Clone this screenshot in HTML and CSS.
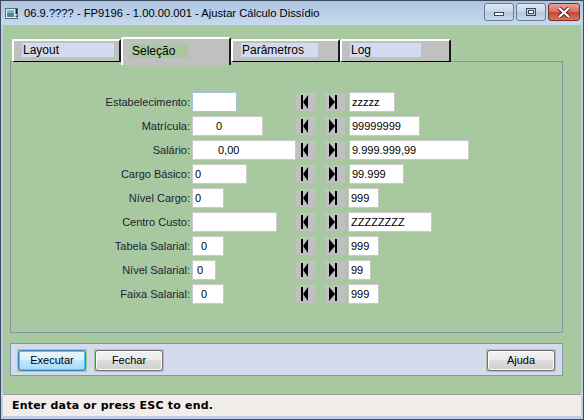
FILE: index.html
```html
<!DOCTYPE html>
<html>
<head>
<meta charset="utf-8">
<link rel="stylesheet" href="styles.css">
</head>
<body>
<div class="window">
  <div class="titlebar">
    <svg class="appicon" width="14" height="12" viewBox="0 0 14 12">
      <rect x="0.5" y="0.5" width="12" height="10" fill="#e8eef4" stroke="#5a6a7a"/>
      <rect x="2" y="2" width="7" height="7" fill="#3f8f8a"/>
      <rect x="2" y="2" width="7" height="3" fill="#7fb8c8"/>
      <rect x="10.5" y="1" width="1.5" height="5" fill="#1a1a1a"/>
      <rect x="10.5" y="7.5" width="1.5" height="1.5" fill="#1a1a1a"/>
    </svg>
    <span class="title">06.9.???? - FP9196 - 1.00.00.001 - Ajustar Cálculo Dissídio</span>
    <div class="controls">
      <div class="wbtn"><svg width="12" height="10" viewBox="0 0 12 10"><rect x="1.5" y="5.5" width="9" height="3" fill="#fff" stroke="#3a4656"/></svg></div>
      <div class="wbtn"><svg width="12" height="10" viewBox="0 0 12 10"><rect x="1.5" y="1.5" width="9" height="7" fill="none" stroke="#3a4656"/><rect x="3.5" y="3.5" width="5" height="3" fill="#fff" stroke="#3a4656"/></svg></div>
      <div class="wbtn close"><svg width="14" height="11" viewBox="0 0 14 11"><path d="M2 1 L12 10 M12 1 L2 10" stroke="#5a2020" stroke-width="4"/><path d="M2 1 L12 10 M12 1 L2 10" stroke="#fff" stroke-width="2.2"/></svg></div>
    </div>
  </div>
  <div class="client">
    <div class="tabs">
      <div class="tab w109"><span class="tlabel lw92">Layout</span></div>
      <div class="tab sel w110"><span class="tlabel green lw57">Seleção</span></div>
      <div class="tab w109"><span class="tlabel lw77">Parâmetros</span></div>
      <div class="tab w111"><span class="tlabel lw71">Log</span></div>
    </div>
    <div class="panel">
      <div class="form">
        <div class="lbl">Estabelecimento:</div>
        <div class="cell"><div class="inp focus" style="width:45px"></div></div>
        <div class="ib"><svg width="20" height="18" viewBox="0 0 20 18"><rect x="5" y="2" width="2" height="14" fill="#000"/><path d="M7 9 L12 2 L12 16 Z" fill="#000"/></svg></div>
        <div class="ib"><svg width="20" height="18" viewBox="0 0 20 18"><path d="M4 2 L10 9 L4 16 Z" fill="#000"/><rect x="10" y="2" width="2" height="14" fill="#000"/></svg></div>
        <div class="cell"><div class="inp pl3" style="width:46px">zzzzz</div></div>

        <div class="lbl">Matrícula:</div>
        <div class="cell"><div class="inp" style="width:71px;padding-left:23px">0</div></div>
        <div class="ib"><svg width="20" height="18" viewBox="0 0 20 18"><rect x="5" y="2" width="2" height="14" fill="#000"/><path d="M7 9 L12 2 L12 16 Z" fill="#000"/></svg></div>
        <div class="ib"><svg width="20" height="18" viewBox="0 0 20 18"><path d="M4 2 L10 9 L4 16 Z" fill="#000"/><rect x="10" y="2" width="2" height="14" fill="#000"/></svg></div>
        <div class="cell"><div class="inp pl3" style="width:71px">99999999</div></div>

        <div class="lbl">Salário:</div>
        <div class="cell"><div class="inp" style="width:104px;padding-left:25px">0,00</div></div>
        <div class="ib"><svg width="20" height="18" viewBox="0 0 20 18"><rect x="5" y="2" width="2" height="14" fill="#000"/><path d="M7 9 L12 2 L12 16 Z" fill="#000"/></svg></div>
        <div class="ib"><svg width="20" height="18" viewBox="0 0 20 18"><path d="M4 2 L10 9 L4 16 Z" fill="#000"/><rect x="10" y="2" width="2" height="14" fill="#000"/></svg></div>
        <div class="cell"><div class="inp pl3" style="width:120px">9.999.999,99</div></div>

        <div class="lbl">Cargo Básico:</div>
        <div class="cell"><div class="inp pl2" style="width:55px">0</div></div>
        <div class="ib"><svg width="20" height="18" viewBox="0 0 20 18"><rect x="5" y="2" width="2" height="14" fill="#000"/><path d="M7 9 L12 2 L12 16 Z" fill="#000"/></svg></div>
        <div class="ib"><svg width="20" height="18" viewBox="0 0 20 18"><path d="M4 2 L10 9 L4 16 Z" fill="#000"/><rect x="10" y="2" width="2" height="14" fill="#000"/></svg></div>
        <div class="cell"><div class="inp pl3" style="width:55px">99.999</div></div>

        <div class="lbl">Nível Cargo:</div>
        <div class="cell"><div class="inp pl2" style="width:32px">0</div></div>
        <div class="ib"><svg width="20" height="18" viewBox="0 0 20 18"><rect x="5" y="2" width="2" height="14" fill="#000"/><path d="M7 9 L12 2 L12 16 Z" fill="#000"/></svg></div>
        <div class="ib"><svg width="20" height="18" viewBox="0 0 20 18"><path d="M4 2 L10 9 L4 16 Z" fill="#000"/><rect x="10" y="2" width="2" height="14" fill="#000"/></svg></div>
        <div class="cell"><div class="inp pl3 sh" style="width:31px">999</div></div>

        <div class="lbl">Centro Custo:</div>
        <div class="cell"><div class="inp" style="width:85px"></div></div>
        <div class="ib"><svg width="20" height="18" viewBox="0 0 20 18"><rect x="5" y="2" width="2" height="14" fill="#000"/><path d="M7 9 L12 2 L12 16 Z" fill="#000"/></svg></div>
        <div class="ib"><svg width="20" height="18" viewBox="0 0 20 18"><path d="M4 2 L10 9 L4 16 Z" fill="#000"/><rect x="10" y="2" width="2" height="14" fill="#000"/></svg></div>
        <div class="cell"><div class="inp pl3 sh" style="width:84px">ZZZZZZZZ</div></div>

        <div class="lbl">Tabela Salarial:</div>
        <div class="cell"><div class="inp" style="width:32px;padding-left:8px">0</div></div>
        <div class="ib"><svg width="20" height="18" viewBox="0 0 20 18"><rect x="5" y="2" width="2" height="14" fill="#000"/><path d="M7 9 L12 2 L12 16 Z" fill="#000"/></svg></div>
        <div class="ib"><svg width="20" height="18" viewBox="0 0 20 18"><path d="M4 2 L10 9 L4 16 Z" fill="#000"/><rect x="10" y="2" width="2" height="14" fill="#000"/></svg></div>
        <div class="cell"><div class="inp pl3 sh" style="width:31px">999</div></div>

        <div class="lbl">Nível Salarial:</div>
        <div class="cell"><div class="inp" style="width:24px;padding-left:4px">0</div></div>
        <div class="ib"><svg width="20" height="18" viewBox="0 0 20 18"><rect x="5" y="2" width="2" height="14" fill="#000"/><path d="M7 9 L12 2 L12 16 Z" fill="#000"/></svg></div>
        <div class="ib"><svg width="20" height="18" viewBox="0 0 20 18"><path d="M4 2 L10 9 L4 16 Z" fill="#000"/><rect x="10" y="2" width="2" height="14" fill="#000"/></svg></div>
        <div class="cell"><div class="inp pl3 sh" style="width:23px">99</div></div>

        <div class="lbl">Faixa Salarial:</div>
        <div class="cell"><div class="inp" style="width:32px;padding-left:8px">0</div></div>
        <div class="ib"><svg width="20" height="18" viewBox="0 0 20 18"><rect x="5" y="2" width="2" height="14" fill="#000"/><path d="M7 9 L12 2 L12 16 Z" fill="#000"/></svg></div>
        <div class="ib"><svg width="20" height="18" viewBox="0 0 20 18"><path d="M4 2 L10 9 L4 16 Z" fill="#000"/><rect x="10" y="2" width="2" height="14" fill="#000"/></svg></div>
        <div class="cell"><div class="inp pl3 sh" style="width:31px">999</div></div>
      </div>
    </div>
    <div class="btnbar">
      <div class="halo"><div class="btn default">Executar</div></div>
      <div class="halo"><div class="btn">Fechar</div></div>
      <div class="spacer"></div>
      <div class="halo"><div class="btn">Ajuda</div></div>
    </div>
  </div>
  <div class="status">Enter data or press ESC to end.</div>
</div>
</body>
</html>
```

FILE: styles.css
```css
* { box-sizing: border-box; }
html, body { margin: 0; padding: 0; }
body { width: 584px; height: 420px; overflow: hidden; background: #fff; font-family: "Liberation Sans", Arial, sans-serif; font-size: 11px; }

.window {
  width: 584px; height: 420px;
  border: 1px solid #3d4b5c;
  background: #bcd1e9;
  padding: 0 2px 2px 2px;
  display: flex; flex-direction: column;
}

.titlebar {
  height: 24px;
  margin: 0 -2px;
  padding: 0 3px 0 4px;
  background: linear-gradient(#adc5e2, #c6d9ee);
  display: flex; align-items: center;
}
.appicon { margin-top: 1px; flex: none; }
.title { margin-left: 5px; font-size: 11.2px; color: #000; white-space: nowrap; flex: 1; font-family: "Liberation Sans", Arial, sans-serif; }
.controls { display: flex; gap: 2px; align-self: flex-start; margin-top: 2px; }
.wbtn {
  width: 30px; height: 18px;
  border: 1px solid #6b7d93; border-radius: 3px;
  background: linear-gradient(#dde8f4 0%, #c4d5e8 50%, #b3c7de 51%, #c9d9ea 100%);
  display: flex; align-items: center; justify-content: center;
}
.wbtn.close {
  width: 32px;
  border-color: #7a2e26;
  background: linear-gradient(#e6a496 0%, #d46a5a 50%, #c44634 51%, #d8735f 100%);
}

.client {
  flex: 1;
  background: #a8c8a0;
  padding: 12px 0 0 7px;
  display: flex; flex-direction: column;
}

.tabs {
  display: flex; align-items: flex-end;
  height: 25px;
  padding-left: 2px;
  margin-bottom: -1px;
  position: relative; z-index: 1;
}
.tab {
  height: 23px;
  background: #c0c0c0;
  border-top: 2px solid #fff;
  border-left: 2px solid #fff;
  border-right: 2px solid #1c1c1c;
  border-bottom: 1px solid #000;
  border-top-left-radius: 2px;
  padding: 2px 0 0 8px;
}
.tab.sel {
  height: 28px;
  margin-bottom: -3px;
  border-bottom: none;
  padding-top: 5px;
}
.w109 { width: 109px; }
.w110 { width: 110px; }
.w111 { width: 111px; }
.tlabel {
  display: block; height: 14px; line-height: 14px;
  background: #d3dcee; color: #000;
  padding-left: 1px;
  font-size: 12px;
}
.tlabel.green { background: #a8c8a0; }
.lw92 { width: 92px; }
.lw57 { width: 57px; }
.lw77 { width: 77px; }
.lw71 { width: 71px; }

.panel {
  width: 553px; height: 272px;
  border: 1px solid #8795a6;
  padding-top: 30px;
}
.form {
  display: grid;
  grid-template-columns: 178px 107px 20px 29px auto;
  column-gap: 0;
  row-gap: 4px;
  grid-auto-rows: 20px;
}
.lbl {
  text-align: right; line-height: 20px; color: #1b2434;
  padding-right: 1px;
  margin-right: -2px;
}
.cell { display: flex; align-items: stretch; }
.form .cell:nth-child(5n+2) { padding-left: 3px; }
.form .cell:nth-child(5n) { padding-left: 4px; }
.ib:nth-child(5n+4) { margin-left: 9px; }
.ib { width: 20px; height: 18px; margin-top: 1px; background: #c0c0c0; }
.ib svg { display: block; }
.inp {
  height: 20px; background: #fff;
  border: 1px solid #c9c9c9;
  line-height: 18px; color: #000;
  white-space: nowrap; overflow: hidden;
}
.inp.focus { border-color: #a7c2dd; }
.inp.sh { margin-left: -1px; }
.pl2 { padding-left: 2px; }
.pl3 { padding-left: 2px; }

.btnbar {
  width: 553px; height: 33px;
  margin-top: 10px;
  background: #d3dbec;
  border: 1px solid #8795a6;
  padding: 5px 6px 0 6px;
  display: flex; gap: 7px; align-items: flex-start;
}
.spacer { flex: 1; }
.halo { padding: 1px; background: #a8c8a0; }
.btn {
  width: 68px; height: 21px;
  border: 1px solid #707070; border-radius: 3px;
  background: linear-gradient(#f2f2f2 0%, #ebebeb 45%, #dddddd 50%, #cfcfcf 100%);
  box-shadow: inset 0 0 0 1px #fbfbfb;
  text-align: center; line-height: 19px; color: #000; font-size: 11px;
}
.btn.default {
  border-color: #3c7fb1;
  background: linear-gradient(#eaf6fd 0%, #d9f0fc 45%, #bee6fd 50%, #a7d9f5 100%);
  box-shadow: inset 0 0 0 1px #48d0f8;
}

.status {
  height: 22px;
  margin: 0 0 1px 0;
  background: #f0edeb;
  border-top: 1px solid #9a9a9a;
  padding-left: 9px;
  font-family: "DejaVu Sans", Verdana, sans-serif;
  font-weight: bold; font-size: 11px;
  letter-spacing: 0.2px;
  line-height: 21px; color: #000;
}
```
